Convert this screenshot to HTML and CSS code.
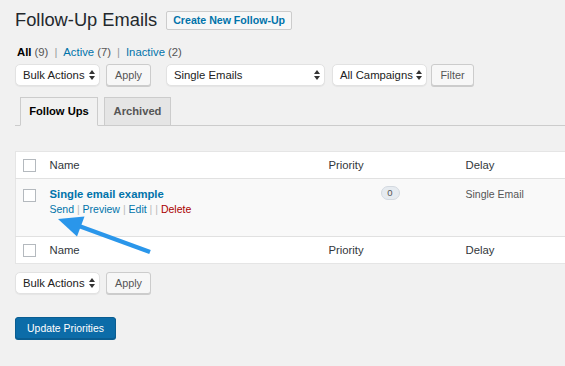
FILE: index.html
```html
<!DOCTYPE html>
<html lang="en">
<head>
    <meta charset="UTF-8">
    <title>Follow-Up Emails</title>
    <link rel="stylesheet" href="styles.css">
</head>
<body>

    <div class="wrap">
        <div class="page-head">
            <h1>Follow-Up Emails</h1>
            <a class="title-action" href="#">Create New Follow-Up</a>
        </div>

        <!-- Status filter links -->
        <ul class="subsubsub">
            <li><a class="current" href="#">All <span class="count">(9)</span></a></li>
            <li class="sep">|</li>
            <li><a href="#">Active <span class="count">(7)</span></a></li>
            <li class="sep">|</li>
            <li><a href="#">Inactive <span class="count">(2)</span></a></li>
        </ul>

        <div class="tablenav">
            <div class="select w-bulk"><span>Bulk Actions</span><svg width="6" height="10" viewBox="0 0 6 10"><path d="M3 0L6 4H0z M3 10L0 6H6z" fill="#333"/></svg></div>
            <button class="button">Apply</button>
            <div class="select w-type"><span>Single Emails</span><svg width="6" height="10" viewBox="0 0 6 10"><path d="M3 0L6 4H0z M3 10L0 6H6z" fill="#333"/></svg></div>
            <div class="select w-camp"><span>All Campaigns</span><svg width="6" height="10" viewBox="0 0 6 10"><path d="M3 0L6 4H0z M3 10L0 6H6z" fill="#333"/></svg></div>
            <button class="button filter">Filter</button>
        </div>

        <!-- Tabs -->
        <div class="nav-tabs">
            <a class="nav-tab active tab-followups" href="#">Follow Ups</a>
            <a class="nav-tab tab-archived" href="#">Archived</a>
        </div>

        <div class="table-clip">
            <table class="list-table">
                <colgroup>
                    <col class="c-cb"><col class="c-name"><col class="c-prio"><col class="c-delay"><col>
                </colgroup>
                <thead>
                    <tr>
                        <td class="cb"><span class="checkbox"></span></td>
                        <th>Name</th>
                        <th>Priority</th>
                        <th>Delay</th>
                        <th></th>
                    </tr>
                </thead>
                <tbody>
                    <tr>
                        <td class="cb"><span class="checkbox"></span></td>
                        <td>
                            <a class="row-title" href="#">Single email example</a>
                            <div class="row-actions">
                                <a href="#">Send</a> <span class="sep">|</span>
                                <a href="#">Preview</a> <span class="sep">|</span>
                                <a href="#">Edit</a> <span class="sep">|</span> <span class="sep">|</span>
                                <a class="delete" href="#">Delete</a>
                            </div>
                        </td>
                        <td class="prio"><span class="badge">0</span></td>
                        <td class="delay">Single Email</td>
                        <td></td>
                    </tr>
                </tbody>
                <tfoot>
                    <tr>
                        <td class="cb"><span class="checkbox"></span></td>
                        <th>Name</th>
                        <th>Priority</th>
                        <th>Delay</th>
                        <th></th>
                    </tr>
                </tfoot>
            </table>
        </div>

        <div class="tablenav bottom">
            <div class="select w-bulk"><span>Bulk Actions</span><svg width="6" height="10" viewBox="0 0 6 10"><path d="M3 0L6 4H0z M3 10L0 6H6z" fill="#333"/></svg></div>
            <button class="button">Apply</button>
        </div>

        <div class="submit">
            <button class="button-primary">Update Priorities</button>
        </div>

        <!-- Annotation arrow -->
        <svg class="arrow" width="565" height="366" viewBox="0 0 565 366">
            <line x1="150" y1="252" x2="79" y2="226" stroke="#2a96ea" stroke-width="4.5"/>
            <polygon points="58,219 84.5,216.5 77,236.5" fill="#2a96ea"/>
        </svg>
    </div>

</body>
</html>
```

FILE: styles.css
```css
html, body {
    margin: 0;
    background: #f1f1f1;
    overflow: hidden;
}

body {
    font-family: "Liberation Sans", Arial, sans-serif;
    font-size: 11.3px;
    color: #444;
}

a {
    color: #0073aa;
    text-decoration: none;
}

.wrap {
    position: relative;
    padding: 9px 0 0 15px;
    height: 357px;
}

.page-head {
    display: flex;
    align-items: center;
    gap: 9px;
    height: 22px;
}

.page-head h1 {
    margin: 0;
    font-size: 18.3px;
    font-weight: 400;
    color: #23282d;
    line-height: 22px;
}

.title-action {
    display: inline-block;
    height: 17px;
    line-height: 17px;
    padding: 0 6px;
    border: 1px solid #ccc;
    border-radius: 2px;
    background: #f7f7f7;
    font-size: 10.6px;
    font-weight: 700;
    margin-top: 1px;
}

/* status links */
.subsubsub {
    list-style: none;
    margin: 13px 0 0 2px;
    padding: 0;
    display: flex;
    gap: 6px;
    line-height: 16px;
    color: #999;
    font-size: 11.3px;
}

.subsubsub .current {
    color: #000;
    font-weight: 700;
}

.subsubsub .count {
    color: #555;
    font-weight: 400;
}

/* toolbars */
.tablenav {
    display: flex;
    align-items: center;
    margin-top: 4px;
    height: 22px;
}

.tablenav.bottom {
    margin-top: 8px;
}

.select {
    box-sizing: border-box;
    height: 22px;
    display: flex;
    align-items: center;
    justify-content: space-between;
    padding: 0 4px 0 7px;
    background: #fff;
    border: 1px solid #e2e2e2;
    border-radius: 5px;
    box-shadow: 0 1px 1px rgba(0, 0, 0, 0.05);
    color: #222;
    font-size: 11.3px;
}

.w-bulk { width: 85px; }
.w-type { width: 159px; margin-left: 15px; }
.w-camp { width: 95px; margin-left: 7px; }

.button {
    box-sizing: border-box;
    height: 22px;
    width: 45px;
    margin-left: 6px;
    padding: 0;
    background: #f7f7f7;
    border: 1px solid #ccc;
    border-radius: 3px;
    box-shadow: 0 1px 0 #ccc;
    font-family: inherit;
    font-size: 10.8px;
    color: #555;
}

.button.filter {
    width: 43px;
    margin-left: 4px;
}

/* tabs */
.nav-tabs {
    display: flex;
    gap: 6px;
    margin-top: 11px;
    padding-left: 5px;
    border-bottom: 1px solid #ccc;
    height: 28px;
}

.nav-tab {
    box-sizing: border-box;
    height: 29px;
    line-height: 27px;
    text-align: center;
    border: 1px solid #ccc;
    background: #e5e5e5;
    font-weight: 700;
    font-size: 11.2px;
    color: #555;
}

.tab-followups { width: 78px; }
.tab-archived { width: 67px; }

.nav-tab.active {
    background: #f1f1f1;
    border-bottom-color: #f1f1f1;
    color: #000;
}

/* table */
.table-clip {
    margin-top: 25px;
    overflow: hidden;
}

.list-table {
    width: 640px;
    table-layout: fixed;
    border-collapse: collapse;
    background: #fff;
    border: 1px solid #e5e5e5;
    box-shadow: 0 1px 1px rgba(0, 0, 0, 0.04);
}

.c-cb { width: 27px; }
.c-name { width: 279px; }
.c-prio { width: 137px; }
.c-delay { width: 150px; }

.list-table th,
.list-table td {
    padding: 0 7px;
    text-align: left;
    font-weight: 400;
    vertical-align: top;
}

.list-table thead th,
.list-table tfoot th,
.list-table thead td,
.list-table tfoot td {
    height: 26px;
    vertical-align: middle;
    color: #32373c;
    font-size: 11.3px;
}

.list-table thead tr {
    border-bottom: 1px solid #e1e1e1;
}

.list-table tfoot tr {
    border-top: 1px solid #e1e1e1;
}

.list-table tbody tr {
    background: #f9f9f9;
    height: 58px;
}

.list-table td.cb {
    padding: 0 0 0 7px;
}

.checkbox {
    display: block;
    width: 11px;
    height: 11px;
    border: 1px solid #b4b9be;
    background: #fff;
}

.list-table tbody td.cb .checkbox {
    margin-top: 10px;
}

.row-title {
    display: block;
    margin-top: 7px;
    line-height: 16px;
    font-weight: 700;
    font-size: 11.3px;
}

.row-actions {
    line-height: 14px;
    font-size: 10.5px;
    color: #bbb;
}

.row-actions .delete {
    color: #a00;
}

.list-table td.prio {
    text-align: center;
}

.badge {
    display: inline-block;
    margin-top: 7px;
    width: 17px;
    height: 12px;
    line-height: 12px;
    border: 1px solid #d3d9e0;
    border-radius: 7px;
    background: #e6ebf0;
    font-size: 9.5px;
    color: #555;
}

.list-table td.delay {
    padding-top: 7px;
    line-height: 16px;
    font-size: 10.5px;
    color: #555;
}

/* submit */
.submit {
    margin-top: 23px;
}

.button-primary {
    box-sizing: border-box;
    width: 101px;
    height: 22px;
    padding: 0;
    background: #0c6ca8;
    border: 1px solid #0a5d91;
    border-radius: 3px;
    box-shadow: 0 1px 0 #0a5d91;
    color: #fff;
    font-family: inherit;
    font-size: 10.4px;
}

.arrow {
    position: absolute;
    left: 0;
    top: 0;
    pointer-events: none;
}
```
